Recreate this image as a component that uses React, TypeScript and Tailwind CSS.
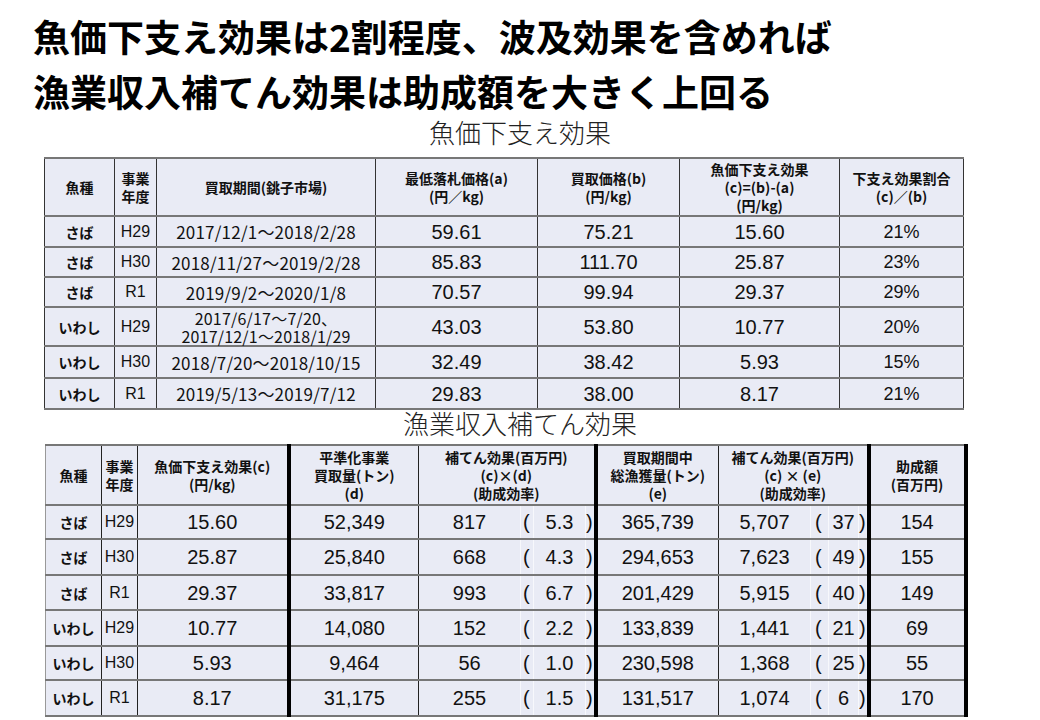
const jp = "font-['Noto_Sans_CJK_JP',sans-serif]";
const num = "font-['Liberation_Sans','Noto_Sans_CJK_JP',sans-serif]";

const t1Cols = [70, 42, 219, 162, 142, 160, 124];
const t1Heights = [31, 30, 30, 39, 32, 31];
const t1Rows = [
  ["さば", "H29", ["2017/12/1～2018/2/28"], "59.61", "75.21", "15.60", "21%"],
  ["さば", "H30", ["2018/11/27～2019/2/28"], "85.83", "111.70", "25.87", "23%"],
  ["さば", "R1", ["2019/9/2～2020/1/8"], "70.57", "99.94", "29.37", "29%"],
  ["いわし", "H29", ["2017/6/17～7/20、", "2017/12/1～2018/1/29"], "43.03", "53.80", "10.77", "20%"],
  ["いわし", "H30", ["2018/7/20～2018/10/15"], "32.49", "38.42", "5.93", "15%"],
  ["いわし", "R1", ["2019/5/13～2019/7/12"], "29.83", "38.00", "8.17", "21%"],
] as const;

const t2Cols = [56, 36, 151, 130, 102, 13, 52, 10, 123, 92, 18, 30, 10, 97];
const t2Heights = [34, 36, 35, 36, 34, 36];
const t2Rows = [
  ["さば", "H29", "15.60", "52,349", "817", "5.3", "365,739", "5,707", "37", "154"],
  ["さば", "H30", "25.87", "25,840", "668", "4.3", "294,653", "7,623", "49", "155"],
  ["さば", "R1", "29.37", "33,817", "993", "6.7", "201,429", "5,915", "40", "149"],
  ["いわし", "H29", "10.77", "14,080", "152", "2.2", "133,839", "1,441", "21", "69"],
  ["いわし", "H30", "5.93", "9,464", "56", "1.0", "230,598", "1,368", "25", "55"],
  ["いわし", "R1", "8.17", "31,175", "255", "1.5", "131,517", "1,074", "6", "170"],
];

// table 1 cell borders: dark thin verticals, grey 2px horizontals
const c1 = "border-y-2 border-y-[#777] border-x border-x-[#333] bg-[#e9ebf5] text-center p-0 text-[#111]";
const h1 = `${c1} ${jp} font-bold text-[14px] leading-[18px]`;
const b1 = `${c1} leading-none`;

// table 2 cells
const c2 = "border-y-2 border-y-[#777] bg-[#e9ebf5] text-center p-0 text-[#111]";
const thin = "border-l border-l-[#222]";
const thick = "border-l-4 border-l-black";
const faint = "border-l border-l-[#f7f8fc]";
const h2 = `${c2} ${jp} font-bold text-[14px] leading-[18px]`;
const b2 = `${c2} leading-none`;

function Table1() {
  return (
    <table className="ml-[44px] mt-[12px] w-[920px] table-fixed border-collapse border-t-2 border-t-[#333] border-l border-l-[#888]">
      <colgroup>
        {t1Cols.map((w, i) => (
          <col key={i} style={{ width: w }} />
        ))}
      </colgroup>
      <thead>
        <tr className="h-[58px]">
          <th className={h1}>魚種</th>
          <th className={h1}>
            事業
            <br />
            年度
          </th>
          <th className={h1}>買取期間(銚子市場)</th>
          <th className={h1}>
            最低落札価格(a)
            <br />
            (円／kg)
          </th>
          <th className={h1}>
            買取価格(b)
            <br />
            (円/kg)
          </th>
          <th className={h1}>
            魚価下支え効果
            <br />
            (c)=(b)-(a)
            <br />
            (円/kg)
          </th>
          <th className={h1}>
            下支え効果割合
            <br />
            (c)／(b)
          </th>
        </tr>
      </thead>
      <tbody>
        {t1Rows.map((r, i) => (
          <tr key={i} style={{ height: t1Heights[i] }}>
            <td className={`${b1} ${jp} font-bold text-[14px]`}>{r[0]}</td>
            <td className={`${b1} ${num} text-[16px]`}>{r[1]}</td>
            <td className={`${c1} ${jp} tracking-[0.2px]`}>
              {r[2].length > 1 ? (
                r[2].map((l, j) => (
                  <div key={j} className="text-[16px] leading-[18px]">
                    {l}
                  </div>
                ))
              ) : (
                <div className="text-[17px] leading-none">{r[2][0]}</div>
              )}
            </td>
            <td className={`${b1} ${num} text-[20px]`}>{r[3]}</td>
            <td className={`${b1} ${num} text-[20px]`}>{r[4]}</td>
            <td className={`${b1} ${num} text-[20px]`}>{r[5]}</td>
            <td className={`${b1} ${num} text-[18px] font-medium`}>{r[6]}</td>
          </tr>
        ))}
      </tbody>
    </table>
  );
}

function Table2() {
  return (
    <table className="ml-[45px] mt-[8px] w-[920px] table-fixed border-collapse border-t-2 border-t-[#333] border-l border-l-[#999] border-r-4 border-r-black">
      <colgroup>
        {t2Cols.map((w, i) => (
          <col key={i} style={{ width: w }} />
        ))}
      </colgroup>
      <thead>
        <tr className="h-[60px]">
          <th className={h2}>魚種</th>
          <th className={`${h2} ${thin}`}>
            事業
            <br />
            年度
          </th>
          <th className={`${h2} ${thin}`}>
            魚価下支え効果(c)
            <br />
            (円/kg)
          </th>
          <th className={`${h2} ${thick}`}>
            平準化事業
            <br />
            買取量(トン)
            <br />
            (d)
          </th>
          <th colSpan={4} className={`${h2} ${thin}`}>
            補てん効果(百万円)
            <br />
            (c)×(d)
            <br />
            (助成効率)
          </th>
          <th className={`${h2} ${thick}`}>
            買取期間中
            <br />
            総漁獲量(トン)
            <br />
            (e)
          </th>
          <th colSpan={4} className={`${h2} ${thin}`}>
            補てん効果(百万円)
            <br />
            (c) × (e)
            <br />
            (助成効率)
          </th>
          <th className={`${h2} ${thick}`}>
            助成額
            <br />
            (百万円)
          </th>
        </tr>
      </thead>
      <tbody>
        {t2Rows.map((r, i) => (
          <tr key={i} style={{ height: t2Heights[i] }}>
            <td className={`${b2} ${jp} font-bold text-[14px]`}>{r[0]}</td>
            <td className={`${b2} ${thin} ${num} text-[16px]`}>{r[1]}</td>
            <td className={`${b2} ${thin} ${num} text-[20px]`}>{r[2]}</td>
            <td className={`${b2} ${thick} ${num} text-[20px]`}>{r[3]}</td>
            <td className={`${b2} ${thin} ${num} text-[20px]`}>{r[4]}</td>
            <td className={`${b2} ${faint} ${num} text-[20px] text-left pl-[2px]`}>(</td>
            <td className={`${b2} ${faint} ${num} text-[20px]`}>{r[5]}</td>
            <td className={`${b2} ${faint} ${num} text-[20px] text-left`}>)</td>
            <td className={`${b2} ${thick} ${num} text-[20px]`}>{r[6]}</td>
            <td className={`${b2} ${thin} ${num} text-[20px]`}>{r[7]}</td>
            <td className={`${b2} ${faint} ${num} text-[20px] text-left pl-[4px]`}>(</td>
            <td className={`${b2} ${faint} ${num} text-[20px]`}>{r[8]}</td>
            <td className={`${b2} ${faint} ${num} text-[20px] text-left`}>)</td>
            <td className={`${b2} ${thick} ${num} text-[20px]`}>{r[9]}</td>
          </tr>
        ))}
      </tbody>
    </table>
  );
}

export default function App() {
  return (
    <div className={`w-[1040px] h-[720px] bg-white overflow-hidden ${jp}`}>
      <h1 className="pl-[33px] pt-[9px] text-[37px] leading-[55px] font-bold text-black">
        魚価下支え効果は2割程度、波及効果を含めれば
        <br />
        漁業収入補てん効果は助成額を大きく上回る
      </h1>
      <div className="text-center text-[26px] leading-[26px] font-light text-[#222]">魚価下支え効果</div>
      <Table1 />
      <div className="text-center text-[26px] leading-[26px] font-light text-[#222]">漁業収入補てん効果</div>
      <Table2 />
    </div>
  );
}
